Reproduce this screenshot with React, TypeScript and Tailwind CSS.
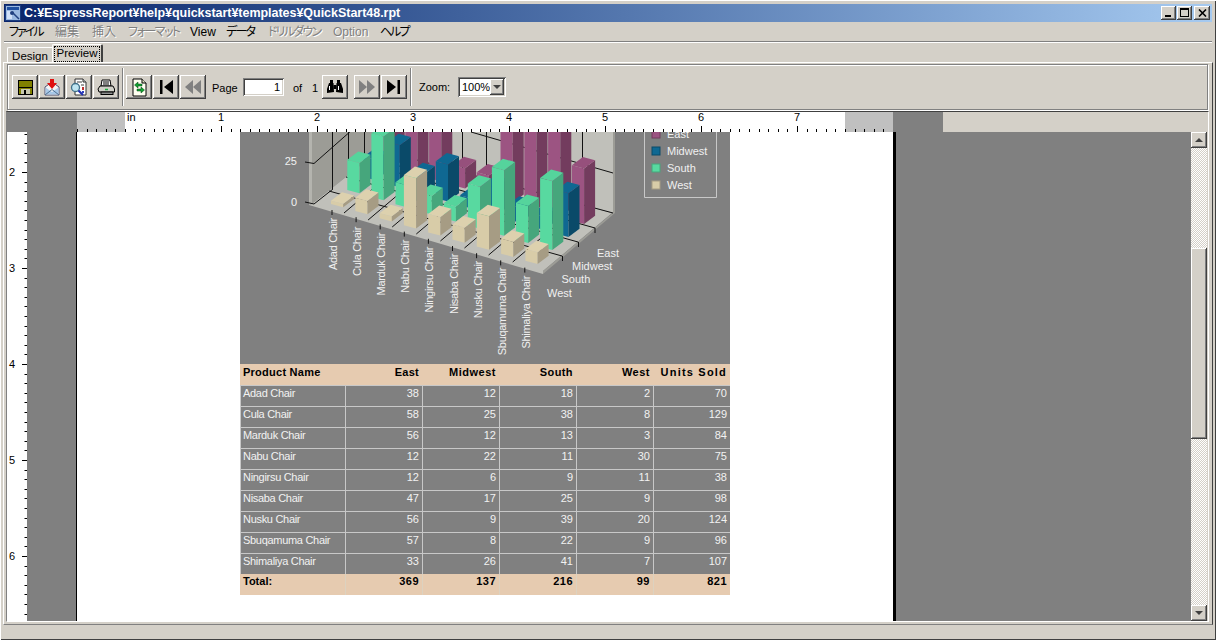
import React from "react";

const raised = "shadow-[inset_-1px_-1px_0_#404040,inset_1px_1px_0_#ffffff,inset_-2px_-2px_0_#808080]";
const sunken = "shadow-[inset_1px_1px_0_#808080,inset_-1px_-1px_0_#ffffff,inset_2px_2px_0_#404040,inset_-2px_-2px_0_#d4d0c8]";

type Row = [string, number, number, number, number, number];
const rows: Row[] = [
  ["Adad Chair", 38, 12, 18, 2, 70],
  ["Cula Chair", 58, 25, 38, 8, 129],
  ["Marduk Chair", 56, 12, 13, 3, 84],
  ["Nabu Chair", 12, 22, 11, 30, 75],
  ["Ningirsu Chair", 12, 6, 9, 11, 38],
  ["Nisaba Chair", 47, 17, 25, 9, 98],
  ["Nusku Chair", 56, 9, 39, 20, 124],
  ["Sbuqamuma Chair", 57, 8, 22, 9, 96],
  ["Shimaliya Chair", 33, 26, 41, 7, 107],
];

const labelTops = [218, 227, 233, 240, 247, 254, 261, 268, 276];

function Bar({ x, yb, h, c }: { x: number; yb: number; h: number; c: [string, string, string] }) {
  const w = 12.2, fdy = 3.2, sdx = 11, sdy = -8.3;
  const p = (pts: number[][]) => pts.map((q) => q.join(",")).join(" ");
  return (
    <g>
      <polygon fill={c[0]} points={p([[x, yb - h], [x + w, yb + fdy - h], [x + w, yb + fdy], [x, yb]])} />
      <polygon fill={c[1]} points={p([[x + w, yb + fdy - h], [x + w + sdx, yb + fdy + sdy - h], [x + w + sdx, yb + fdy + sdy], [x + w, yb + fdy]])} />
      <polygon fill={c[2]} points={p([[x, yb - h], [x + sdx, yb + sdy - h], [x + w + sdx, yb + fdy + sdy - h], [x + w, yb + fdy - h]])} />
    </g>
  );
}

const PURPLE: [string, string, string] = ["#9c5482", "#733c5e", "#96507c"];
const BLUE: [string, string, string] = ["#0f6892", "#0a4a69", "#0f6892"];
const GREEN: [string, string, string] = ["#58d9a0", "#46a67c", "#55d49c"];
const TAN: [string, string, string] = ["#d8cca8", "#a69c84", "#ddd1ae"];

function Chart() {
  const sc = 1.68;
  return (
    <svg width={490} height={232} viewBox="240 132 490 232" className="block" fontFamily="'Liberation Sans', sans-serif" fontSize={11}>
      <rect x={240} y={132} width={490} height={232} fill="#808080" />
      {/* walls */}
      <polygon points="309,120 312,120 312,204 309,205" fill="#b4b4ae" />
      <polygon points="312,120 380,120 380,150 312,204" fill="#9c9c96" />
      <polygon points="380,120 613,120 613,213 380,150" fill="#c0c0ba" />
      <polygon points="613,120 615,120 615,213 613,213" fill="#9c9c96" />
      {/* floor */}
      <polygon points="309,205 543,274 543,271 612,213 380,150 312,204" fill="#c0c0ba" />
      <polygon points="543,271 615,211 615,213 543,274" fill="#9c9c96" />
      {/* grid */}
      <g stroke="#111" strokeWidth={1} fill="none">
        <line x1={305} y1={162} x2={314} y2={163.5} />
        <line x1={314} y1={163.5} x2={352} y2={130} />
        <line x1={471} y1={132} x2={613} y2={173} />
        <line x1={305} y1={202} x2={314} y2={204} />
        <line x1={314} y1={204} x2={333} y2={189} />
        <line x1={332.5} y1={132} x2={332.5} y2={189} />
        <line x1={348.5} y1={132} x2={348.5} y2={176} />
        <line x1={364.5} y1={132} x2={364.5} y2={163} />
        {[414, 438, 462, 486, 510, 534, 558, 582].map((x) => (
          <line key={x} x1={x + 0.5} y1={132} x2={x + 0.5} y2={150 + (x - 380) * 0.27} />
        ))}
        <line x1={380} y1={150} x2={613} y2={213} />
        {[0, 1, 2, 3, 4, 5, 6, 7].map((i) => (
          <line key={i} x1={344 + 24.1 * i} y1={213 + 7 * i} x2={344 + 24.1 * i + 71} y2={213 + 7 * i - 60} />
        ))}
        {[[329, 191, 562, 256], [346, 177, 578, 242], [363, 163, 595, 228]].map((l, i) => (
          <line key={i} x1={l[0]} y1={l[1]} x2={l[2]} y2={l[3]} />
        ))}
        {[0, 1, 2, 3, 4, 5, 6, 7, 8].map((i) => (
          <line key={i} x1={332 + 24.1 * i} y1={210 + 7.2 * i} x2={332 + 24.1 * i} y2={215 + 7.2 * i} />
        ))}
        <line x1={595} y1={228} x2={595} y2={233} />
        <line x1={578.5} y1={242} x2={578.5} y2={247} />
        <line x1={562.5} y1={256} x2={562.5} y2={261} />
      </g>
      {/* bars, back row first */}
      {rows.map((r, i) => <Bar key={"e" + i} x={381.5 + 23.8 * i} yb={164 + 7.1 * i} h={r[1] * sc} c={PURPLE} />)}
      {rows.map((r, i) => <Bar key={"m" + i} x={363.5 + 24.1 * i} yb={177 + 7.1 * i} h={r[2] * sc} c={BLUE} />)}
      {rows.map((r, i) => <Bar key={"s" + i} x={347.3 + 24.1 * i} yb={190 + 7.1 * i} h={r[3] * sc} c={GREEN} />)}
      {rows.map((r, i) => <Bar key={"w" + i} x={331 + 24.3 * i} yb={204 + 7.1 * i} h={r[4] * sc} c={TAN} />)}
      {/* axis labels */}
      <g fill="#f0f0f0">
        <text x={297} y={165} textAnchor="end">25</text>
        <text x={297} y={206} textAnchor="end">0</text>
        {rows.map((r, i) => (
          <text key={i} letterSpacing={-0.3} transform={`translate(${337 + 24.1 * i},${labelTops[i]}) rotate(-90)`} textAnchor="end">{r[0]}</text>
        ))}
        <text x={597} y={257}>East</text>
        <text x={572} y={270}>Midwest</text>
        <text x={561.5} y={283}>South</text>
        <text x={547} y={297}>West</text>
      </g>
      {/* legend */}
      <polyline points="644.5,120 644.5,197.5 716.5,197.5 716.5,120" fill="none" stroke="#c8c8c8" />
      {[["East", 130, PURPLE], ["Midwest", 147, BLUE], ["South", 164, GREEN], ["West", 181, TAN]].map(([t, y, c]) => (
        <g key={t as string}>
          <rect x={652} y={y as number} width={8} height={8} fill={(c as string[])[0]} stroke={(c as string[])[1]} strokeWidth={1} />
          <text x={667} y={(y as number) + 8} fill="#f0f0f0">{t as string}</text>
        </g>
      ))}
    </svg>
  );
}

const headers: [string, string][] = [
  ["East", "tracking-[0.25px]"],
  ["Midwest", "tracking-[0.5px]"],
  ["South", "tracking-[0.4px]"],
  ["West", "tracking-[0.5px]"],
  ["Units Sold", "tracking-[1.2px]"],
];

function ReportTable() {
  const cols = "grid grid-cols-[105px_77px_77px_77px_77px_77px] h-[21px] text-[11px] leading-[14px]";
  return (
    <div className="w-[490px]">
      <div className={`${cols} bg-[#e6cbb0] font-bold text-black pt-px`}>
        <div className="pl-[3px] tracking-[0.25px]">Product Name</div>
        {headers.map(([h, t]) => (
          <div key={h} className={`text-right pr-[3px] ${t}`}>{h}</div>
        ))}
      </div>
      {rows.map((r) => (
        <div key={r[0]} className={`${cols} bg-[#808080] text-[#f2f2f2] border-t border-[#c8c8c8]`}>
          <div className="pl-[2px] border-l border-[#c8c8c8] tracking-[-0.3px]">{r[0]}</div>
          {r.slice(1).map((v, i) => (
            <div key={i} className="text-right pr-[3px] border-l border-[#c8c8c8]">{v}</div>
          ))}
        </div>
      ))}
      <div className={`${cols} bg-[#e6cbb0] font-bold text-black`}>
        <div className="pl-[3px]">Total:</div>
        {[369, 137, 216, 99, 821].map((v) => (
          <div key={v} className="text-right pr-[3px] border-l border-[#dcd2c0] tracking-[0.5px]">{v}</div>
        ))}
      </div>
    </div>
  );
}

function HRuler() {
  const ticks: number[] = [];
  for (let k = -5; k <= 79; k++) ticks.push(k);
  return (
    <svg width={816} height={20} className="block shrink-0" fontFamily="'Liberation Sans', sans-serif" fontSize={11}>
      <rect x={0} y={0} width={816} height={20} fill="#c0c0c0" />
      <rect x={48} y={0} width={720} height={20} fill="#ffffff" />
      {ticks.map((k) => {
        const x = Math.round(48 + 9.6 * k) + 0.5;
        const long = k % 10 === 0 && k > 0;
        return <line key={k} x1={x} x2={x} y1={long ? 14 : 17} y2={20} stroke="#000" />;
      })}
      <text x={50} y={9} fill="#000">in</text>
      {[1, 2, 3, 4, 5, 6, 7].map((n) => (
        <text key={n} x={48 + 96 * n} y={9} fill="#000" textAnchor="middle">{n}</text>
      ))}
    </svg>
  );
}

function VRuler() {
  const ks: number[] = [];
  for (let k = -4; k <= 46; k++) ks.push(k);
  return (
    <svg width={20} height={489} className="block shrink-0" fontFamily="'Liberation Sans', sans-serif" fontSize={11}>
      <rect width={20} height={489} fill="#ffffff" />
      {ks.map((k) => {
        const y = Math.round(40 + 9.6 * k) + 0.5;
        return <line key={k} x1={k % 10 === 0 ? 15 : 17.5} x2={20} y1={y} y2={y} stroke="#000" />;
      })}
      {[2, 3, 4, 5, 6].map((n, i) => (
        <text key={n} x={2} y={44 + 96 * i} fill="#000">{n}</text>
      ))}
    </svg>
  );
}

const S = ({ children, w = 20, h = 20 }: { children: React.ReactNode; w?: number; h?: number }) => (
  <svg width={w} height={h} viewBox={`0 0 ${w} ${h}`} className="block">{children}</svg>
);

const IconSave = () => (
  <S>
    <rect x={3} y={3} width={15} height={15} fill="#000" />
    <rect x={4} y={4} width={13} height={6} fill="#808000" />
    <rect x={4} y={11} width={13} height={6} fill="#808000" />
    <rect x={6} y={12} width={9} height={5} fill="#c8c8b0" />
    <rect x={9} y={13} width={2} height={4} fill="#000" />
  </S>
);
const IconMail = () => (
  <S>
    <polygon points="3,10 10,5 17,10 17,18 3,18" fill="#f4f4f4" stroke="#505070" />
    <polygon points="3.5,10.5 10,15 16.5,10.5 16.5,17.5 3.5,17.5" fill="#a8c8e8" />
    <polyline points="3,18 10,12.5 17,18" fill="none" stroke="#507090" />
    <polygon points="8,2 12,2 12,6 15,6 10,12 5,6 8,6" fill="#e01010" />
  </S>
);
const IconPreview = () => (
  <S>
    <polygon points="6,2 14,2 17,5 17,18 6,18" fill="#fff" stroke="#303030" />
    <polyline points="14,2 14,5 17,5" fill="#d0d0d0" stroke="#303030" />
    <g stroke="#404040"><line x1={8} y1={5} x2={13} y2={5} /><line x1={12} y1={8} x2={15} y2={8} /></g>
    <rect x={13} y={10} width={2} height={3} fill="#c03030" />
    <rect x={13} y={14} width={2} height={2} fill="#3040c0" />
    <circle cx={6.5} cy={10.5} r={4} fill="#bfe6f2" stroke="#407088" strokeWidth={1.3} />
    <line x1={9.5} y1={13.5} x2={14} y2={18} stroke="#2030b0" strokeWidth={2.2} />
  </S>
);
const IconPrint = () => (
  <S>
    <polygon points="6,3 14,3 15,9 5,9" fill="#fff" stroke="#000" />
    <line x1={7} y1={5} x2={13} y2={5} stroke="#000" />
    <line x1={7} y1={7} x2={13} y2={7} stroke="#000" />
    <polygon points="4,9 17,9 18.5,12 18.5,15 3,15 2,12" fill="#d0d0c8" stroke="#000" />
    <rect x={5} y={15} width={12} height={2.5} fill="#909090" stroke="#000" />
    <line x1={9} y1={12.5} x2={12} y2={12.5} stroke="#20b040" strokeWidth={1.5} />
  </S>
);
const IconRefresh = () => (
  <S>
    <polygon points="4,2 13,2 17,6 17,19 4,19" fill="#fffff0" stroke="#000" />
    <polyline points="13,2 13,6 17,6" fill="#e0e0c0" stroke="#000" />
    <polygon points="9,5 9,7 13,7 13,9 9,9 9,11 5.5,8" fill="#10a030" stroke="#064010" strokeWidth={0.5} />
    <polygon points="12,10 12,12 8,12 8,14 12,14 12,16 15.5,13" fill="#10a030" stroke="#064010" strokeWidth={0.5} />
  </S>
);
const IconFirst = () => (
  <S><rect x={4} y={3} width={2.5} height={14} fill="#000" /><polygon points="17,3 17,17 8,10" fill="#000" /></S>
);
const IconPrev = () => (
  <S><polygon points="10,3 10,17 2,10" fill="#808080" /><polygon points="18,3 18,17 10,10" fill="#808080" /></S>
);
const IconNext = () => (
  <S><polygon points="2,3 2,17 10,10" fill="#808080" /><polygon points="10,3 10,17 18,10" fill="#808080" /></S>
);
const IconLast = () => (
  <S><polygon points="3,3 3,17 12,10" fill="#000" /><rect x={13.5} y={3} width={2.5} height={14} fill="#000" /></S>
);
const IconBinoc = () => (
  <S>
    <rect x={5} y={3} width={3} height={4} fill="#000" />
    <rect x={12} y={3} width={3} height={4} fill="#000" />
    <polygon points="4,6 8.5,6 9,15 2,16 2,12" fill="#000" />
    <polygon points="11.5,6 16,6 18,12 18,16 11,15" fill="#000" />
    <rect x={8.5} y={8} width={3} height={4} fill="#000" />
    <rect x={4} y={9} width={1} height={4} fill="#fff" />
    <rect x={13} y={9} width={1} height={4} fill="#fff" />
  </S>
);

const TB = ({ children }: { children: React.ReactNode }) => (
  <div className={`w-[26px] h-[24px] mr-px bg-[#d4d0c8] flex items-center justify-center ${raised}`}>{children}</div>
);
const Sep = ({ ml, mr }: { ml: string; mr: string }) => (
  <div className={`w-[2px] h-[38px] bg-[#808080] border-r border-white ${ml} ${mr}`} />
);

const menus: [string, number, boolean, string][] = [
  ["ファイル", 46, true, "tracking-[-2px]"],
  ["編集", 37, false, ""],
  ["挿入", 36, false, ""],
  ["フォーマット", 62, false, "tracking-[-1.5px]"],
  ["View", 36, true, ""],
  ["データ", 42, true, "tracking-[-1.7px]"],
  ["ドリルダウン", 65, false, "tracking-[-1.8px]"],
  ["Option", 47, false, ""],
  ["ヘルプ", 40, true, "tracking-[-2px]"],
];

export default function App() {
  return (
    <div className="relative w-[1216px] h-[640px] overflow-hidden bg-[#d4d0c8] flex flex-col pt-[4px] font-['Liberation_Sans','Noto_Sans_CJK_JP',sans-serif] text-black shadow-[inset_1px_1px_0_#ffffff,inset_-1px_-1px_0_#404040]">
      {/* title bar */}
      <div className="mx-[4px] h-[18px] shrink-0 flex items-center bg-gradient-to-r from-[#0a246a] to-[#a6caf0]">
        <svg width={16} height={16} viewBox="0 0 16 16" className="ml-[1px] mr-[3px] shrink-0">
          <rect x={0.5} y={0.5} width={15} height={15} fill="#9ab8e0" stroke="#1a3c80" />
          <rect x={2} y={2} width={12} height={3} fill="#2050a0" />
          <rect x={2} y={6} width={5} height={8} fill="#d0e0f8" />
          <line x1={7} y1={7} x2={14} y2={14} stroke="#204080" strokeWidth={1.5} />
          <circle cx={7} cy={8} r={2} fill="#204080" />
        </svg>
        <span className="text-[12.5px] font-bold text-white whitespace-nowrap leading-none tracking-[-0.03px]">C:¥EspressReport¥help¥quickstart¥templates¥QuickStart48.rpt</span>
        <div className="ml-auto flex items-center mr-[2px]">
          <div className={`w-[15px] h-[14px] bg-[#d4d0c8] relative ${raised}`}>
            <div className="absolute left-[4px] bottom-[3px] w-[6px] h-[2px] bg-black" />
          </div>
          <div className={`w-[15px] h-[14px] bg-[#d4d0c8] relative ml-px ${raised}`}>
            <div className="absolute left-[3px] top-[2px] w-[9px] h-[9px] border border-black border-t-2" />
          </div>
          <div className={`w-[16px] h-[14px] bg-[#d4d0c8] flex items-center justify-center ml-[2px] ${raised}`}>
            <svg width={9} height={8} viewBox="0 0 9 8"><path d="M1 0.5 L8 7.5 M8 0.5 L1 7.5" stroke="#000" strokeWidth={1.6} /></svg>
          </div>
        </div>
      </div>
      {/* menu */}
      <div className="h-[19px] shrink-0 pl-[9px] flex items-center text-[12px] leading-none [font-feature-settings:'palt']">
        {menus.map(([t, w, en, tr]) => (
          <div key={t} style={{ width: w }} className={`shrink-0 whitespace-nowrap ${tr} ${en ? "text-black" : "text-[#808080] [text-shadow:1px_1px_0_#ffffff]"}`}>{t}</div>
        ))}
      </div>
      <div className="h-[2px] shrink-0 mx-[4px] bg-[#808080] border-b border-white" />
      {/* tabs */}
      <div className="h-[19px] shrink-0 flex items-end pl-[7px] text-[11.5px] leading-none">
        <div className="w-[45px] h-[15px] bg-[#d4d0c8] border-t border-l border-white rounded-tl-[2px] flex items-center justify-center pt-[3px]">Design</div>
        <div className="w-[51px] h-[18px] bg-[#d4d0c8] border-t border-l border-white border-r-2 border-r-[#404040] rounded-t-[2px] flex items-center justify-center -mt-px pt-px">
          <span className="border border-dotted border-black px-[2px] py-[1px]">Preview</span>
        </div>
      </div>
      {/* tab pane */}
      <div className="flex-1 min-h-0 mx-[3px] mb-[15px] border-t border-l border-white border-r border-r-[#404040] border-b border-b-[#808080] flex flex-col pt-[1px] pl-[2px] pr-[3px] pb-[2px]">
        {/* toolbar */}
        <div className="h-[46px] shrink-0 border border-[#808080] shadow-[inset_1px_1px_0_#ffffff,1px_1px_0_#ffffff] flex items-center pl-[4px] text-[11px] ml-[1px] mr-px">
          <TB><IconSave /></TB>
          <TB><IconMail /></TB>
          <TB><IconPreview /></TB>
          <TB><IconPrint /></TB>
          <Sep ml="ml-[2px]" mr="mr-[2px]" />
          <TB><IconRefresh /></TB>
          <TB><IconFirst /></TB>
          <TB><IconPrev /></TB>
          <span className="ml-[5px] w-[31px] mt-[2px]">Page</span>
          <div className={`w-[41px] h-[18px] bg-white text-right pr-[4px] pt-[2px] leading-[14px] ${sunken}`}>1</div>
          <span className="ml-[9px] w-[19px] mt-[2px]">of</span>
          <span className="w-[10px] mt-[2px]">1</span>
          <TB><IconBinoc /></TB>
          <div className="w-[5px]" />
          <TB><IconNext /></TB>
          <TB><IconLast /></TB>
          <Sep ml="ml-[2px]" mr="mr-[7px]" />
          <span className="w-[39px] mt-[1px]">Zoom:</span>
          <div className={`w-[48px] h-[20px] bg-white flex items-center justify-between pl-[4px] pr-[2px] ${sunken}`}>
            <span>100%</span>
            <div className={`w-[16px] h-[16px] bg-[#d4d0c8] flex items-center justify-center ${raised}`}>
              <div className="w-0 h-0 border-l-[4px] border-r-[4px] border-t-[4px] border-l-transparent border-r-transparent border-t-[#404040]" />
            </div>
          </div>
        </div>
        {/* viewer */}
        <div className="flex-1 min-h-0 mt-px border-t border-t-[#404040] border-l border-l-[#808080] border-r border-r-white border-b border-b-white flex flex-col">
          <div className="h-[20px] shrink-0 flex">
            <div className="w-[70px] shrink-0 bg-[#808080]" />
            <HRuler />
            <div className="w-[50px] shrink-0 bg-[#808080]" />
            <div className="flex-1 bg-[#d4d0c8]" />
          </div>
          <div className="flex-1 min-h-0 flex overflow-hidden">
            <VRuler />
            <div className="w-[49px] shrink-0 bg-[#808080]" />
            <div className="w-[820px] shrink-0 bg-white border-l border-l-black border-r-[3px] border-r-black pl-[163px] overflow-hidden">
              <Chart />
              <ReportTable />
            </div>
            <div className="flex-1 bg-[#808080]" />
            <div className="w-[16px] mr-px shrink-0 flex flex-col bg-[image:repeating-conic-gradient(#ffffff_0_25%,#d4d0c8_0_50%)] bg-[length:2px_2px]">
              <div className={`h-[16px] shrink-0 bg-[#d4d0c8] flex items-center justify-center ${raised}`}>
                <div className="w-0 h-0 border-l-[4px] border-r-[4px] border-b-[4px] border-l-transparent border-r-transparent border-b-[#404040]" />
              </div>
              <div className="h-[100px] shrink-0" />
              <div className={`h-[191px] shrink-0 bg-[#d4d0c8] ${raised}`} />
              <div className="flex-1" />
              <div className={`h-[16px] shrink-0 bg-[#d4d0c8] flex items-center justify-center ${raised}`}>
                <div className="w-0 h-0 border-l-[4px] border-r-[4px] border-t-[4px] border-l-transparent border-r-transparent border-t-[#404040]" />
              </div>
            </div>
          </div>
        </div>
      </div>
    </div>
  );
}
